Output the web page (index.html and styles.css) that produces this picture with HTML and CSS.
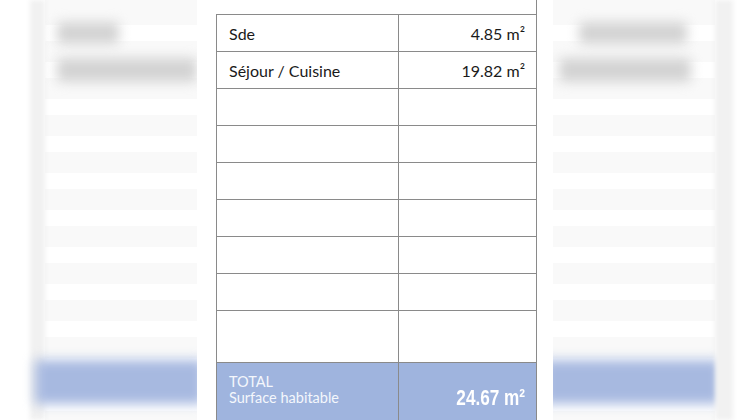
FILE: index.html
```html
<!DOCTYPE html>
<html>
<head>
    <title>Surfaces</title>
    <link rel="stylesheet" href="styles.css">
</head>
<body>

<div class="page">
    <!-- blurred copy on the left -->
    <div class="side side-left">
        <div class="strip"></div>
        <div class="rows">
            <div class="blob blob-a"></div>
            <div class="blob blob-b"></div>
            <div class="fill"></div>
            <div class="band"></div>
        </div>
    </div>

    <main class="sheet">
        <div class="topline"></div>
        <table class="surfaces">
            <colgroup>
                <col class="col-room">
                <col>
            </colgroup>
            <tr>
                <td class="room">Sde</td>
                <td class="area">4.85 m²</td>
            </tr>
            <tr>
                <td class="room">Séjour / Cuisine</td>
                <td class="area">19.82 m²</td>
            </tr>
            <tr><td></td><td></td></tr>
            <tr><td></td><td></td></tr>
            <tr><td></td><td></td></tr>
            <tr><td></td><td></td></tr>
            <tr><td></td><td></td></tr>
            <tr><td></td><td></td></tr>
            <tr class="tall"><td></td><td></td></tr>
            <tr class="total">
                <td class="room">TOTAL<br>Surface habitable</td>
                <td class="area"><span class="big">24.67 m²</span></td>
            </tr>
            <tr><td></td><td></td></tr>
        </table>
    </main>

    <!-- blurred copy on the right -->
    <div class="side side-right">
        <div class="rows">
            <div class="blob blob-c"></div>
            <div class="blob blob-d"></div>
            <div class="fill"></div>
            <div class="band"></div>
        </div>
        <div class="strip"></div>
    </div>
</div>

</body>
</html>
```

FILE: styles.css
```css
body {
    margin: 0;
    padding: 0;
    background: #fff;
    font-family: Lato, "Open Sans", sans-serif;
    overflow: hidden;
}

.page {
    display: grid;
    grid-template-columns: 197px 356px 197px;
    height: 420px;
    overflow: hidden;
}

/* blurred sides */
.side {
    display: flex;
    height: 420px;
    overflow: hidden;
}

.side-left {
    padding-left: 30px;
}

.side-right {
    padding-right: 17px;
}

.strip {
    width: 20px;
    background: #f1f1f1;
    filter: blur(2px);
}

.side-right .strip {
    width: 18px;
}

.rows {
    flex: 1;
    display: flex;
    flex-direction: column;
    padding-top: 22px;
    background: repeating-linear-gradient(to bottom, #f9f9f9 0 21px, #fff 21px 37px);
    background-position: 0 4px;
}

.blob {
    height: 22px;
    background: #d3d3d3;
    filter: blur(6px);
    border-radius: 4px;
}

.blob-a {
    width: 62px;
    margin-left: 12px;
}

.blob-b {
    width: 140px;
    margin-left: 12px;
    margin-top: 14px;
    height: 24px;
}

.blob-c {
    width: 108px;
    margin-left: 26px;
}

.blob-d {
    width: 132px;
    margin-left: 6px;
    margin-top: 14px;
    height: 24px;
}

.fill {
    flex: 1;
}

.band {
    height: 44px;
    margin: 0 -6px 16px -10px;
    background: #a7b9e0;
    filter: blur(6px);
}

/* center sheet */
.sheet {
    background: #fff;
    padding-left: 19px;
    padding-right: 16px;
    overflow: hidden;
}

.topline {
    height: 14px;
    border-right: 1px solid #8a8a8a;
}

.surfaces {
    width: 321px;
    border-collapse: collapse;
    table-layout: fixed;
}

.col-room {
    width: 182px;
}

.surfaces td {
    height: 36px;
    padding: 0;
    border: 1px solid #8a8a8a;
    font-size: 16px;
    color: #1a1a1a;
}

.room {
    padding-left: 12px !important;
}

.area {
    text-align: right;
    padding-right: 11px !important;
}

.surfaces tr.tall td {
    height: 51px;
}

.surfaces tr.total td {
    height: 46px;
    background: #9fb4de;
    color: #f4f7fc;
}

.total .room {
    font-size: 14.5px;
    line-height: 16px;
    padding-bottom: 4px;
}

.total .area {
    vertical-align: bottom;
    padding-bottom: 11px;
}

.big {
    display: inline-block;
    font-family: "Liberation Sans Narrow", "Liberation Sans", sans-serif;
    font-weight: bold;
    font-size: 22px;
    line-height: 22px;
    color: #fff;
    transform: scaleX(0.78);
    transform-origin: right center;
}
```
